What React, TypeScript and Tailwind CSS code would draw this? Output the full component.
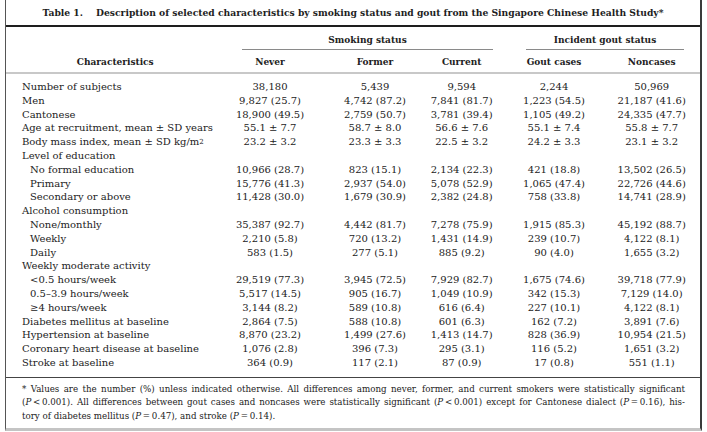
import React from "react";

type Row = { label: React.ReactNode; indent?: boolean; vals?: string[] };

const rows: Row[] = [
  { label: "Number of subjects", vals: ["38,180", "5,439", "9,594", "2,244", "50,969"] },
  { label: "Men", vals: ["9,827 (25.7)", "4,742 (87.2)", "7,841 (81.7)", "1,223 (54.5)", "21,187 (41.6)"] },
  { label: "Cantonese", vals: ["18,900 (49.5)", "2,759 (50.7)", "3,781 (39.4)", "1,105 (49.2)", "24,335 (47.7)"] },
  { label: "Age at recruitment, mean ± SD years", vals: ["55.1 ± 7.7", "58.7 ± 8.0", "56.6 ± 7.6", "55.1 ± 7.4", "55.8 ± 7.7"] },
  {
    label: (
      <>
        Body mass index, mean ± SD kg/m<sup className="text-[7px] relative -top-[1px]">2</sup>
      </>
    ),
    vals: ["23.2 ± 3.2", "23.3 ± 3.3", "22.5 ± 3.2", "24.2 ± 3.3", "23.1 ± 3.2"],
  },
  { label: "Level of education" },
  { label: "No formal education", indent: true, vals: ["10,966 (28.7)", "823 (15.1)", "2,134 (22.3)", "421 (18.8)", "13,502 (26.5)"] },
  { label: "Primary", indent: true, vals: ["15,776 (41.3)", "2,937 (54.0)", "5,078 (52.9)", "1,065 (47.4)", "22,726 (44.6)"] },
  { label: "Secondary or above", indent: true, vals: ["11,428 (30.0)", "1,679 (30.9)", "2,382 (24.8)", "758 (33.8)", "14,741 (28.9)"] },
  { label: "Alcohol consumption" },
  { label: "None/monthly", indent: true, vals: ["35,387 (92.7)", "4,442 (81.7)", "7,278 (75.9)", "1,915 (85.3)", "45,192 (88.7)"] },
  { label: "Weekly", indent: true, vals: ["2,210 (5.8)", "720 (13.2)", "1,431 (14.9)", "239 (10.7)", "4,122 (8.1)"] },
  { label: "Daily", indent: true, vals: ["583 (1.5)", "277 (5.1)", "885 (9.2)", "90 (4.0)", "1,655 (3.2)"] },
  { label: "Weekly moderate activity" },
  { label: "<0.5 hours/week", indent: true, vals: ["29,519 (77.3)", "3,945 (72.5)", "7,929 (82.7)", "1,675 (74.6)", "39,718 (77.9)"] },
  { label: "0.5–3.9 hours/week", indent: true, vals: ["5,517 (14.5)", "905 (16.7)", "1,049 (10.9)", "342 (15.3)", "7,129 (14.0)"] },
  { label: "≥4 hours/week", indent: true, vals: ["3,144 (8.2)", "589 (10.8)", "616 (6.4)", "227 (10.1)", "4,122 (8.1)"] },
  { label: "Diabetes mellitus at baseline", vals: ["2,864 (7.5)", "588 (10.8)", "601 (6.3)", "162 (7.2)", "3,891 (7.6)"] },
  { label: "Hypertension at baseline", vals: ["8,870 (23.2)", "1,499 (27.6)", "1,413 (14.7)", "828 (36.9)", "10,954 (21.5)"] },
  { label: "Coronary heart disease at baseline", vals: ["1,076 (2.8)", "396 (7.3)", "295 (3.1)", "116 (5.2)", "1,651 (3.2)"] },
  { label: "Stroke at baseline", vals: ["364 (0.9)", "117 (2.1)", "87 (0.9)", "17 (0.8)", "551 (1.1)"] },
];

const cols = "grid grid-cols-[211.5px_105px_105px_68.4px_116.2px_79.2px]";

function Cell({ children }: { children: React.ReactNode }) {
  return <div className="flex justify-center whitespace-nowrap">{children}</div>;
}

export default function App() {
  return (
    <div
      className="w-[707px] h-[432px] bg-white text-[#222] overflow-hidden"
      style={{ fontFamily: '"DejaVu Serif", "Liberation Serif", serif' }}
    >
      <div className="ml-[5px] w-[697px] h-[431px] border-l border-l-[#555] border-r-2 border-r-[#3a3a3a] border-b-[3px] border-b-[#c4c4c4] flex flex-col">
        {/* Title */}
        <div className="h-[25px] flex items-center justify-center text-[9.2px] font-bold text-[#1e1e1e] whitespace-nowrap">
          <span className="mr-[13px]">Table 1.</span>
          <span>Description of selected characteristics by smoking status and gout from the Singapore Chinese Health Study*</span>
        </div>
        <div className="h-[2px] bg-[#1e1e1e]" />

        {/* Header */}
        <div className="h-[45px] flex flex-col text-[9px] font-bold text-[#222]">
          <div className="flex mt-[5px]">
            <div className="w-[236px]" />
            <div className="w-[251px] h-[18px] flex items-center justify-center border-b border-b-[#8a8a8a]">Smoking status</div>
            <div className="w-[33px]" />
            <div className="w-[158px] h-[18px] flex items-center justify-center border-b border-b-[#8a8a8a]">Incident gout status</div>
          </div>
          <div className={`${cols} mt-[6px] leading-[12px]`}>
            <div className="flex justify-center pl-[7px]">Characteristics</div>
            <Cell>Never</Cell>
            <Cell>Former</Cell>
            <Cell>Current</Cell>
            <Cell>Gout cases</Cell>
            <Cell>Noncases</Cell>
          </div>
        </div>
        <div className="h-[2px] bg-[#c8c8c8]" />

        {/* Body */}
        <div className="pt-[6px] pb-[7px] text-[10px] leading-[13.8px]">
          {rows.map((r, i) => (
            <div key={i} className={cols}>
              <div className={`whitespace-nowrap ${r.indent ? "pl-[24px]" : "pl-[16px]"}`}>{r.label}</div>
              {(r.vals ?? ["", "", "", "", ""]).map((v, j) => (
                <Cell key={j}>{v}</Cell>
              ))}
            </div>
          ))}
        </div>
        <div className="h-px bg-[#444]" />

        {/* Footnote */}
        <div className="pt-[5px] pl-[16px] pr-[15px] text-[8.7px] leading-[13.5px]">
          <div className="text-justify [text-align-last:justify] whitespace-nowrap">
            * Values are the number (%) unless indicated otherwise. All differences among never, former, and current smokers were statistically significant
          </div>
          <div className="text-justify [text-align-last:justify] whitespace-nowrap">
            (<i>P</i>&thinsp;&lt;&thinsp;0.001). All differences between gout cases and noncases were statistically significant (<i>P</i>&thinsp;&lt;&thinsp;0.001) except for Cantonese dialect (<i>P</i>&thinsp;=&thinsp;0.16), his-
          </div>
          <div className="whitespace-nowrap">
            tory of diabetes mellitus (<i>P</i>&thinsp;=&thinsp;0.47), and stroke (<i>P</i>&thinsp;=&thinsp;0.14).
          </div>
        </div>
      </div>
    </div>
  );
}
